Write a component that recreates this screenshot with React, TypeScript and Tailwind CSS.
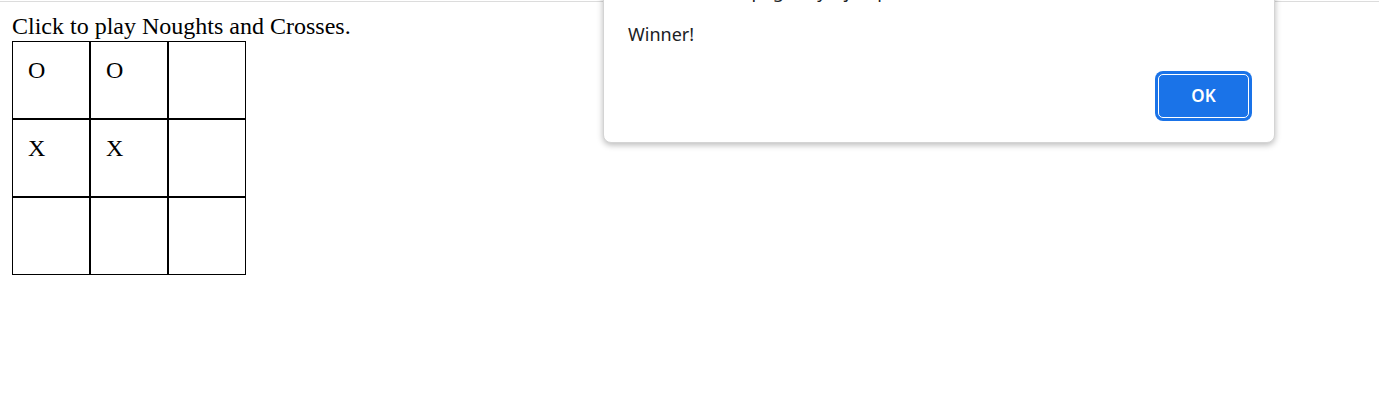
import React from "react";

const cells = ["O", "O", "", "X", "X", "", "", "", ""];

export default function App() {
  return (
    <div className="relative w-[1379px] h-[417px] bg-white overflow-hidden">
      <div className="absolute left-0 right-0 top-[1px] h-px bg-[#dcdcdc]" />
      <div className="p-[12px] font-['Liberation_Serif',serif] text-[24px] text-black">
        <div className="leading-[29px]">Click to play Noughts and Crosses.</div>
        <div className="grid grid-cols-[78px_78px_78px] w-[234px]">
          {cells.map((c, i) => (
            <div
              key={i}
              className="h-[78px] border border-black pl-[15px] pt-[15px] leading-[27.6px]"
            >
              {c}
            </div>
          ))}
        </div>
      </div>

      <div className="absolute left-[603px] top-[-45px] w-[672px] bg-white border border-[#d4d4d4] rounded-[8px] shadow-[0_2px_6px_rgba(0,0,0,0.28)] pt-[23px] pb-[21px] pl-[24px] pr-[22px] font-['Noto_Sans',sans-serif] text-[#202124]">
        <div className="text-[18px] leading-[24px] h-[24px]">An embedded page says, jump</div>
        <div className="mt-[19px] text-[18px] leading-[24px]">Winner!</div>
        <div className="mt-[25px] flex justify-end">
          <div className="w-[97px] h-[50px] p-[3px] bg-[#1a73e8] rounded-[8px]">
            <div className="w-full h-full rounded-[5px] border border-white bg-[#1a73e8] flex items-center justify-center text-white text-[17px] font-semibold">
              OK
            </div>
          </div>
        </div>
      </div>
    </div>
  );
}
